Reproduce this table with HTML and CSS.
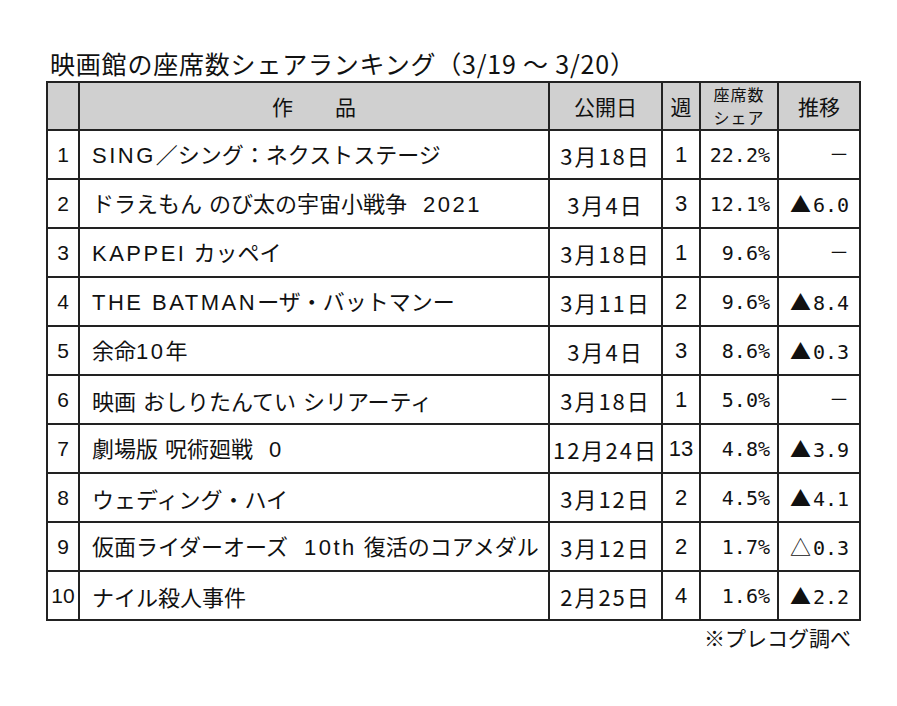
FILE: index.html
```html
<!DOCTYPE html>
<html lang="ja">
<head>
<meta charset="utf-8">
<link rel="stylesheet" href="styles.css">
</head>
<body>
<div class="page">
  <h1 class="title">映画館の座席数シェアランキング（3/19 ～ 3/20）</h1>
  <table class="rank">
    <colgroup>
      <col class="c-no"><col class="c-title"><col class="c-date"><col class="c-week"><col class="c-share"><col class="c-trend">
    </colgroup>
    <thead>
      <tr>
        <th></th>
        <th>作　　品</th>
        <th>公開日</th>
        <th>週</th>
        <th class="two"><span class="l1">座席数</span><span class="l2">シェア</span></th>
        <th>推移</th>
      </tr>
    </thead>
    <tbody>
      <tr><td class="no">1</td><td class="name"><span class="lat">SING</span>／シング：ネクストステージ</td><td class="date">3月18日</td><td class="week">1</td><td class="share">22.2%</td><td class="trend">－</td></tr>
      <tr><td class="no">2</td><td class="name">ドラえもん<span class="gap"> </span>のび太の宇宙小戦争<span class="gap2"> </span><span class="lat">2021</span></td><td class="date">3月4日</td><td class="week">3</td><td class="share">12.1%</td><td class="trend"><span class="tri">▲</span>6.0</td></tr>
      <tr><td class="no">3</td><td class="name"><span class="lat">KAPPEI</span><span class="gap"> </span>カッペイ</td><td class="date">3月18日</td><td class="week">1</td><td class="share">9.6%</td><td class="trend">－</td></tr>
      <tr><td class="no">4</td><td class="name"><span class="lat">THE BATMAN</span>ーザ・バットマンー</td><td class="date">3月11日</td><td class="week">2</td><td class="share">9.6%</td><td class="trend"><span class="tri">▲</span>8.4</td></tr>
      <tr><td class="no">5</td><td class="name">余命<span class="lat">10</span>年</td><td class="date">3月4日</td><td class="week">3</td><td class="share">8.6%</td><td class="trend"><span class="tri">▲</span>0.3</td></tr>
      <tr><td class="no">6</td><td class="name">映画<span class="gap"> </span>おしりたんてい<span class="gap"> </span>シリアーティ</td><td class="date">3月18日</td><td class="week">1</td><td class="share">5.0%</td><td class="trend">－</td></tr>
      <tr><td class="no">7</td><td class="name">劇場版<span class="gap"> </span>呪術廻戦<span class="gap2"> </span><span class="lat">0</span></td><td class="date">12月24日</td><td class="week">13</td><td class="share">4.8%</td><td class="trend"><span class="tri">▲</span>3.9</td></tr>
      <tr><td class="no">8</td><td class="name">ウェディング・ハイ</td><td class="date">3月12日</td><td class="week">2</td><td class="share">4.5%</td><td class="trend"><span class="tri">▲</span>4.1</td></tr>
      <tr><td class="no">9</td><td class="name">仮面ライダーオーズ<span class="gap2"> </span><span class="lat">10th</span><span class="gap"> </span>復活のコアメダル</td><td class="date">3月12日</td><td class="week">2</td><td class="share">1.7%</td><td class="trend"><span class="tri">△</span>0.3</td></tr>
      <tr><td class="no">10</td><td class="name">ナイル殺人事件</td><td class="date">2月25日</td><td class="week">4</td><td class="share">1.6%</td><td class="trend"><span class="tri">▲</span>2.2</td></tr>
    </tbody>
  </table>
  <p class="source">※プレコグ調べ</p>
</div>
</body>
</html>
```

FILE: styles.css
```css
html, body {
  margin: 0;
  padding: 0;
  background: #ffffff;
}

body {
  font-family: "Noto Sans CJK JP", "Noto Sans", sans-serif;
  color: #111111;
}

.page {
  padding: 46px 0 0 46px;
  width: 813px;
}

.title {
  margin: 0 0 0 4px;
  font-size: 25px;
  font-weight: 400;
  line-height: 35px;
  letter-spacing: 0.8px;
  white-space: nowrap;
}

.rank {
  border-collapse: collapse;
  table-layout: fixed;
  width: 813px;
}

.c-no { width: 32px; }
.c-title { width: 470px; }
.c-date { width: 113px; }
.c-week { width: 38px; }
.c-share { width: 78px; }
.c-trend { width: 82px; }

.rank th,
.rank td {
  border: 2px solid #222222;
  padding: 0;
  font-size: 21px;
  line-height: 24px;
  white-space: nowrap;
  overflow: hidden;
}

.rank thead tr {
  height: 48px;
}

.rank th {
  background: #d0d0d0;
  font-weight: 400;
  text-align: center;
}

.rank th.two {
  font-size: 16px;
  line-height: 23px;
  letter-spacing: 1px;
}

.l1,
.l2 {
  display: block;
}

.rank tbody tr {
  height: 49px;
}

.no {
  text-align: center;
  font-family: "Liberation Sans", "Noto Sans", sans-serif;
  font-size: 20px;
}

.name {
  padding-left: 12px !important;
  font-size: 22px !important;
  text-align: left;
}

.lat {
  letter-spacing: 2.5px;
  font-family: "Liberation Sans", "Noto Sans", sans-serif;
}

.gap {
  display: inline-block;
  width: 7px;
}

.gap2 {
  display: inline-block;
  width: 16px;
}

.date {
  text-align: center;
  letter-spacing: 2px;
  font-size: 22px !important;
}

.week {
  text-align: center;
  font-family: "Liberation Sans", "Noto Sans", sans-serif;
  font-size: 22px !important;
}

.share {
  text-align: right;
  padding-right: 7px !important;
  font-family: "DejaVu Sans Mono", monospace;
  font-size: 20px !important;
}

.trend {
  text-align: right;
  padding-right: 10px !important;
  font-family: "DejaVu Sans Mono", "Noto Sans CJK JP", monospace;
  font-size: 20px !important;
}

.tri {
  font-family: "Noto Sans CJK JP", sans-serif;
  font-size: 21px;
  margin-right: 2px;
}

.source {
  margin: 2px 0 0 0;
  padding-right: 8px;
  text-align: right;
  font-size: 21px;
  line-height: 28px;
}
```
